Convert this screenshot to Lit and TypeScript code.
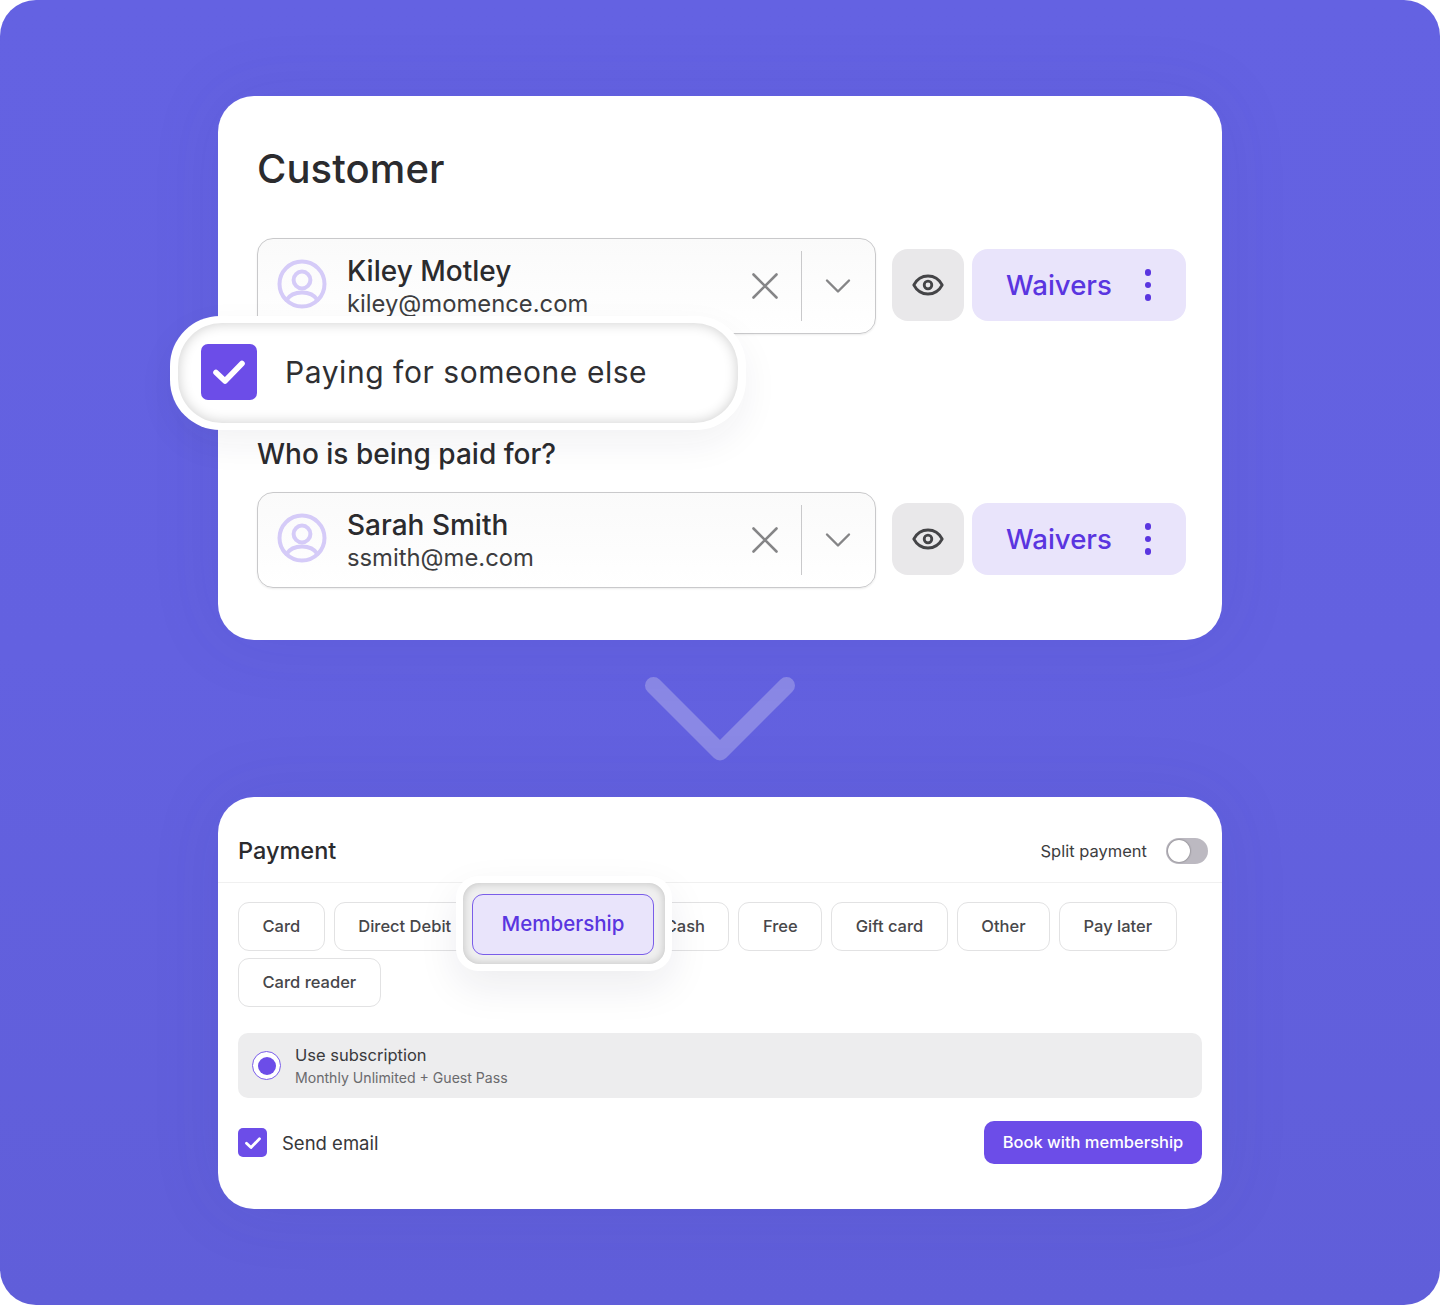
import { LitElement, html, css, svg } from 'lit';
import { customElement } from 'lit/decorators.js';

const check = (size: number) => html`<svg width=${size} height=${size} viewBox="0 0 32 32" fill="none">
  <path d="M3 16.5 L12 25 L29 7.5" stroke="#fff" stroke-width="5.6" stroke-linecap="round" stroke-linejoin="round" />
</svg>`;

const avatarIcon = svg`<circle cx="25" cy="25" r="22.5" stroke="#d5cbf8" stroke-width="4" />
  <circle cx="25" cy="21" r="8.4" stroke="#d5cbf8" stroke-width="4" />
  <path d="M9.5 41 C13 35.5 18.5 33.5 25 33.5 C31.5 33.5 37 35.5 40.5 41" stroke="#d5cbf8" stroke-width="4" stroke-linecap="round" />`;

@customElement('app-root')
export class AppRoot extends LitElement {
  static styles = css`
    :host {
      display: block;
      width: 1440px;
      height: 1306px;
      background: #fff;
      font-family: Inter, 'Noto Sans', sans-serif;
      color: #2b2b2e;
    }

    .canvas {
      box-sizing: border-box;
      height: 1305px;
      padding: 96px 218px 0;
      border-radius: 36px;
      background: linear-gradient(180deg, #6462e2 0%, #6361e0 50%, #605ed9 100%);
    }

    .card {
      position: relative;
      background: #fff;
      border-radius: 36px;
      box-shadow: 0 0 70px rgba(60, 55, 150, 0.1);
    }

    .customer {
      box-sizing: border-box;
      height: 544px;
      padding: 48px 36px 0 39px;
    }

    h1 {
      margin: 0 0 44px;
      font-size: 40px;
      line-height: 50px;
      font-weight: 500;
      letter-spacing: 0.1px;
    }

    .row {
      display: flex;
      align-items: flex-start;
      gap: 8px;
    }

    .select {
      box-sizing: border-box;
      width: 619px;
      height: 96px;
      margin-right: 8px;
      flex: none;
      display: flex;
      align-items: center;
      padding: 0 0 0 19px;
      border: 1.5px solid #c9c9cb;
      border-radius: 16px;
      background: linear-gradient(180deg, #fafafa, #fff);
      box-shadow: 0 1px 2px rgba(0, 0, 0, 0.08);
    }

    .avatar {
      flex: none;
      width: 50px;
      height: 50px;
      margin-top: -4px;
    }

    .who {
      flex: 1;
      margin-left: 20px;
      padding-top: 2px;
    }

    .name {
      font-size: 28px;
      line-height: 33px;
      font-weight: 450;
    }

    .email {
      font-size: 23.8px;
      line-height: 32px;
      color: #3d3d40;
    }

    .clear {
      flex: none;
      width: 28px;
      height: 28px;
      margin-right: 22px;
    }

    .divider {
      flex: none;
      width: 1px;
      height: 70px;
      background: #c9c9cb;
    }

    .caret {
      flex: none;
      width: 26px;
      height: 16px;
      margin: 0 24px 0 23px;
    }

    .eye {
      flex: none;
      width: 72px;
      height: 72px;
      margin-top: 11px;
      display: flex;
      align-items: center;
      justify-content: center;
      border-radius: 16px;
      background: #e9e8ea;
    }

    .waivers {
      box-sizing: border-box;
      width: 214px;
      height: 72px;
      margin-top: 11px;
      flex: none;
      display: flex;
      align-items: center;
      justify-content: space-between;
      padding: 0 35px 0 34px;
      border-radius: 16px;
      background: #e9e4fb;
      color: #5a35e0;
      font-size: 27.6px;
      font-weight: 500;
    }

    .dots {
      display: flex;
      flex-direction: column;
      gap: 6px;
    }

    .dots i {
      display: block;
      width: 6.5px;
      height: 6.5px;
      border-radius: 50%;
      background: #5a35e0;
    }

    .gap-label {
      margin: 102px 0 20px;
      font-size: 28px;
      line-height: 36px;
      font-weight: 500;
    }

    .paying {
      position: absolute;
      left: -48px;
      top: 220px;
      box-sizing: border-box;
      width: 576px;
      height: 114px;
      padding: 7px 8px;
      border-radius: 50px;
      background: #fff;
      box-shadow: 0 14px 36px rgba(30, 30, 60, 0.06);
    }

    .paying-inner {
      box-sizing: border-box;
      height: 100%;
      display: flex;
      align-items: center;
      gap: 28px;
      padding: 0 0 3px 23px;
      border-radius: 44px;
      background: #fff;
      box-shadow: inset 0 0 13px rgba(0, 0, 0, 0.2);
      font-size: 30px;
      letter-spacing: 0.55px;
      color: #2f2f32;
    }

    .box {
      flex: none;
      display: flex;
      align-items: center;
      justify-content: center;
      background: #6c4de8;
    }

    .box.big {
      width: 56px;
      height: 56px;
      border-radius: 7px;
    }

    .box.small {
      width: 29px;
      height: 29px;
      border-radius: 5px;
    }

    .arrow {
      display: block;
      margin: 36px auto;
    }

    .payment {
      box-sizing: border-box;
      height: 412px;
    }

    .pay-head {
      box-sizing: border-box;
      height: 86px;
      display: flex;
      align-items: center;
      justify-content: space-between;
      padding: 22px 14px 0 20px;
      border-bottom: 1px solid #f0f0f0;
    }

    .pay-title {
      font-size: 23.5px;
      font-weight: 450;
    }

    .split {
      display: flex;
      align-items: center;
      gap: 19px;
      font-size: 16.5px;
      color: #3d3d40;
    }

    .toggle {
      box-sizing: border-box;
      width: 42px;
      height: 26px;
      padding: 2px;
      border-radius: 13px;
      background: #bcb9c1;
    }

    .toggle i {
      display: block;
      width: 22px;
      height: 22px;
      border-radius: 50%;
      background: #fff;
      box-shadow: 0 0 2px rgba(0, 0, 0, 0.5);
    }

    .methods {
      position: relative;
      display: flex;
      flex-wrap: wrap;
      gap: 7px 9px;
      margin: 19px 20px 0;
    }

    .chip {
      box-sizing: border-box;
      height: 49px;
      display: flex;
      align-items: center;
      padding: 0 23.5px 2px;
      border: 1px solid #e2e2e3;
      border-radius: 11px;
      background: #fff;
      font-size: 16.5px;
      font-weight: 450;
      color: #47474a;
    }

    /* sits under the raised Membership button and keeps Cash in its place */
    .slot {
      width: 146.5px;
    }

    .focus {
      position: absolute;
      left: 218px;
      top: -26px;
      box-sizing: border-box;
      width: 216px;
      height: 95px;
      padding: 7px;
      border-radius: 22px;
      background: #fff;
      box-shadow: 0 16px 40px rgba(30, 30, 60, 0.08);
    }

    .focus-inner {
      box-sizing: border-box;
      height: 100%;
      padding: 11px 11px 8px 9px;
      border-radius: 16px;
      background: #efefef;
      box-shadow: inset 0 0 8px rgba(0, 0, 0, 0.2);
    }

    .focus-btn {
      box-sizing: border-box;
      height: 61px;
      display: flex;
      align-items: center;
      justify-content: center;
      border: 1.5px solid #7a5de9;
      border-radius: 11px;
      background: #e9e4fb;
      color: #5a35e0;
      font-size: 20.5px;
      font-weight: 500;
      padding-bottom: 2px;
    }

    .sub {
      box-sizing: border-box;
      height: 65px;
      display: flex;
      align-items: center;
      gap: 14px;
      margin: 26px 20px 0;
      padding-left: 14px;
      border-radius: 10px;
      background: #ededee;
    }

    .radio {
      box-sizing: border-box;
      flex: none;
      width: 29px;
      height: 29px;
      padding: 4.5px;
      border: 1px solid #7a5de9;
      border-radius: 50%;
      background: #fff;
    }

    .radio i {
      display: block;
      width: 18px;
      height: 18px;
      border-radius: 50%;
      background: #6c4de8;
    }

    .sub-title {
      font-size: 16.5px;
      line-height: 22px;
      color: #3a3a3d;
    }

    .sub-note {
      margin-top: 2px;
      font-size: 14.1px;
      line-height: 19px;
      color: #6a6a6d;
    }

    .foot {
      display: flex;
      align-items: center;
      justify-content: space-between;
      margin: 23px 20px 0;
    }

    .send {
      display: flex;
      align-items: center;
      gap: 15px;
      font-size: 18.5px;
      color: #37373a;
    }

    .book {
      box-sizing: border-box;
      width: 218px;
      height: 43px;
      display: flex;
      align-items: center;
      justify-content: center;
      padding-bottom: 2px;
      border-radius: 10px;
      background: #6c4de8;
      color: #fff;
      font-size: 16.5px;
      font-weight: 500;
    }
  `;

  renderCustomer(name: string, email: string) {
    return html`
      <div class="row">
        <div class="select">
          <svg class="avatar" viewBox="0 0 50 50" fill="none">${avatarIcon}</svg>
          <div class="who">
            <div class="name">${name}</div>
            <div class="email">${email}</div>
          </div>
          <svg class="clear" viewBox="0 0 28 28" fill="none">
            <path d="M2.5 2.5 L25.5 25.5 M25.5 2.5 L2.5 25.5" stroke="#858587" stroke-width="2.6" stroke-linecap="round" />
          </svg>
          <div class="divider"></div>
          <svg class="caret" viewBox="0 0 26 16" fill="none">
            <path d="M2 2.5 L13 13.5 L24 2.5" stroke="#858587" stroke-width="2.4" stroke-linecap="round" stroke-linejoin="round" />
          </svg>
        </div>
        <div class="eye">
          <svg width="32" height="22" viewBox="0 0 32 22" fill="none">
            <path d="M1.8 11 C5 5 10 2 16 2 C22 2 27 5 30.2 11 C27 17 22 20 16 20 C10 20 5 17 1.8 11 Z" stroke="#444447" stroke-width="2.8" stroke-linejoin="round" />
            <circle cx="16" cy="11" r="3.8" stroke="#444447" stroke-width="2.8" />
          </svg>
        </div>
        <div class="waivers">
          <span>Waivers</span>
          <span class="dots"><i></i><i></i><i></i></span>
        </div>
      </div>
    `;
  }

  render() {
    const methods = ['Free', 'Gift card', 'Other', 'Pay later', 'Card reader'];
    return html`
      <div class="canvas">
        <section class="card customer">
          <h1>Customer</h1>
          ${this.renderCustomer('Kiley Motley', 'kiley@momence.com')}
          <div class="gap-label">Who is being paid for?</div>
          ${this.renderCustomer('Sarah Smith', 'ssmith@me.com')}
          <div class="paying">
            <div class="paying-inner">
              <span class="box big">${check(32)}</span>
              <span>Paying for someone else</span>
            </div>
          </div>
        </section>

        <svg class="arrow" width="152" height="85" viewBox="0 0 152 85" fill="none">
          <path d="M9.5 9.5 L76 76 L142.5 9.5" stroke="#8a88e5" stroke-width="17" stroke-linecap="round" stroke-linejoin="round" />
        </svg>

        <section class="card payment">
          <div class="pay-head">
            <span class="pay-title">Payment</span>
            <span class="split">Split payment <span class="toggle"><i></i></span></span>
          </div>
          <div class="methods">
            <span class="chip">Card</span>
            <span class="chip">Direct Debit</span>
            <span class="chip slot"></span>
            <span class="chip">Cash</span>
            ${methods.map((m) => html`<span class="chip">${m}</span>`)}
            <div class="focus">
              <div class="focus-inner">
                <div class="focus-btn">Membership</div>
              </div>
            </div>
          </div>
          <div class="sub">
            <span class="radio"><i></i></span>
            <div>
              <div class="sub-title">Use subscription</div>
              <div class="sub-note">Monthly Unlimited + Guest Pass</div>
            </div>
          </div>
          <div class="foot">
            <span class="send"><span class="box small">${check(16)}</span>Send email</span>
            <span class="book">Book with membership</span>
          </div>
        </section>
      </div>
    `;
  }
}
